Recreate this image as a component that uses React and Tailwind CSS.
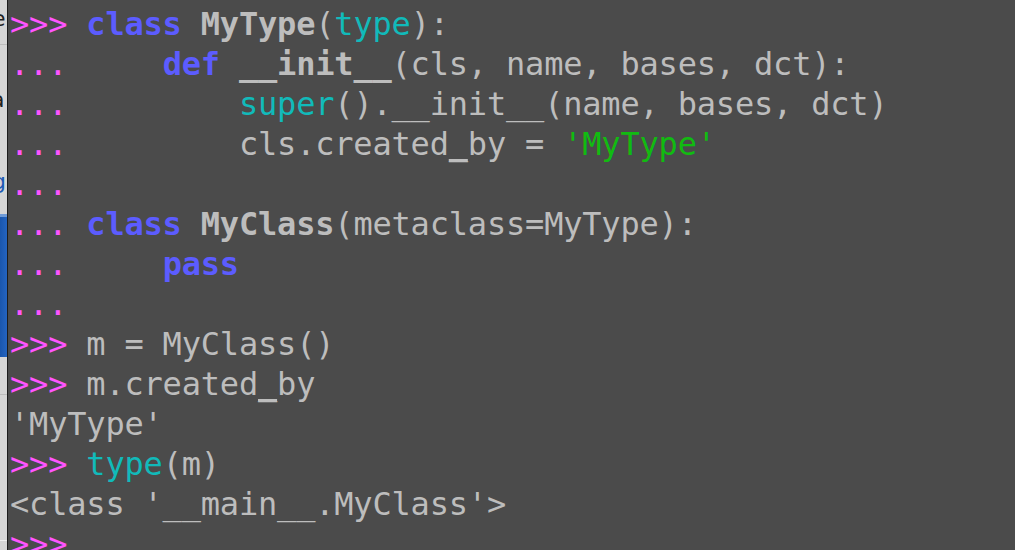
import React from "react";

const P = ({ children }) => <span className="text-[#ff55ff]">{children}</span>;
const K = ({ children }) => <span className="font-bold text-[#5c5cff]">{children}</span>;
const B = ({ children }) => <span className="font-bold">{children}</span>;
const C = ({ children }) => <span className="text-[#11baba]">{children}</span>;
const G = ({ children }) => <span className="text-[#11bb11]">{children}</span>;
const U = () => (
  <span className="underline decoration-[#bdbdbd] decoration-[2px] underline-offset-[4px] [text-decoration-skip-ink:none]">_</span>
);

export default function App() {
  const lines = [
    <><P>&gt;&gt;&gt;</P> <K>class</K> <B>MyType</B>(<C>type</C>):</>,
    <><P>...</P>     <K>def</K> <B>__init__</B>(cls, name, bases, dct):</>,
    <><P>...</P>         <C>super</C>().__init__(name, bases, dct)</>,
    <><P>...</P>         cls.created<U />by = <G>'MyType'</G></>,
    <><P>...</P></>,
    <><P>...</P> <K>class</K> <B>MyClass</B>(metaclass=MyType):</>,
    <><P>...</P>     <K>pass</K></>,
    <><P>...</P></>,
    <><P>&gt;&gt;&gt;</P> m = MyClass()</>,
    <><P>&gt;&gt;&gt;</P> m.created<U />by</>,
    <>'MyType'</>,
    <><P>&gt;&gt;&gt;</P> <C>type</C>(m)</>,
    <>&lt;class '__main__.MyClass'&gt;</>,
    <><P>&gt;&gt;&gt;</P> </>,
  ];
  return (
    <div className="flex w-[1015px] h-[550px] overflow-hidden bg-[#4b4b4b]">
      <div className="w-[7px] shrink-0 h-full overflow-hidden bg-[#d6d6d6] flex flex-col font-['DejaVu_Sans',sans-serif] text-[22px] leading-none">
        <div className="h-[8px]" />
        <div className="ml-[-8px] text-[#222] h-[22px]">e</div>
        <div className="h-[14px]" />
        <div className="h-px bg-[#bdbdbd]" />
        <div className="h-[44px]" />
        <div className="ml-[-9px] text-[#222] h-[24px]">a</div>
        <div className="h-[58px]" />
        <div className="ml-[-8px] text-[#1d5bb5] h-[30px]">g</div>
        <div className="h-[13px]" />
        <div className="h-[3px] bg-[#6f9bd8]" />
        <div className="h-[140px] bg-gradient-to-r from-[#1a56ad] to-[#2464c0]" />
        <div className="h-[37px]" />
        <div className="h-px bg-[#bdbdbd]" />
        <div className="h-[145px]" />
        <div className="h-px bg-[#f0f0f0]" />
      </div>
      <div className="w-px shrink-0 bg-[#1c1c1c]" />
      <div className="flex-1 pt-[4px] pl-[2px] font-['DejaVu_Sans_Mono',monospace] text-[32px] tracking-[-0.19px] leading-[40px] text-[#bdbdbd] whitespace-pre">
        {lines.map((l, i) => (
          <div key={i} className="h-[40px]">{l}</div>
        ))}
      </div>
    </div>
  );
}
